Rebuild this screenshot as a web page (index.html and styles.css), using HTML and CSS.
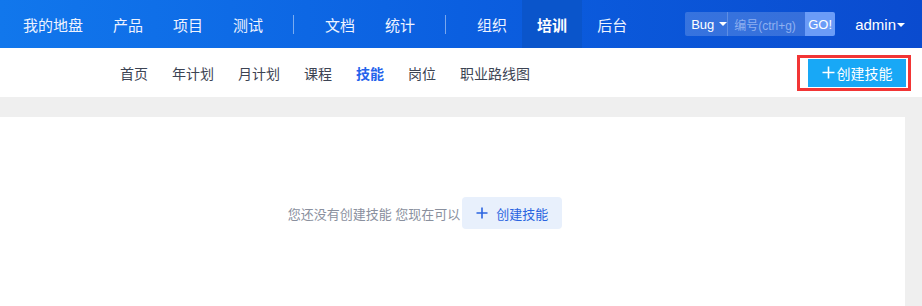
FILE: index.html
```html
<!DOCTYPE html>
<html lang="zh-CN">
<head>
    <meta charset="UTF-8">
    <meta name="viewport" content="width=device-width, initial-scale=1.0">
    <title>培训 - 技能</title>
    <link rel="stylesheet" href="styles.css">
</head>
<body>
    <header class="topbar">
        <nav class="main-nav">
            <a class="nav-item">我的地盘</a>
            <a class="nav-item">产品</a>
            <a class="nav-item">项目</a>
            <a class="nav-item">测试</a>
            <span class="nav-divider"></span>
            <a class="nav-item">文档</a>
            <a class="nav-item">统计</a>
            <span class="nav-divider"></span>
            <a class="nav-item">组织</a>
            <a class="nav-item active">培训</a>
            <a class="nav-item">后台</a>
        </nav>
        <div class="search-box">
            <span class="search-type">Bug <i class="caret"></i></span>
            <span class="search-input">编号(ctrl+g)</span>
            <span class="search-go">GO!</span>
        </div>
        <div class="user-menu">admin<i class="caret small"></i></div>
    </header>

    <div class="subbar">
        <nav class="sub-nav">
            <a class="sub-item">首页</a>
            <a class="sub-item">年计划</a>
            <a class="sub-item">月计划</a>
            <a class="sub-item">课程</a>
            <a class="sub-item active">技能</a>
            <a class="sub-item">岗位</a>
            <a class="sub-item">职业路线图</a>
        </nav>
        <div class="highlight-box">
            <button class="btn-primary">
                <svg width="13" height="13" viewBox="0 0 13 13"><path d="M6.5 0.5v12M0.5 6.5h12" stroke="#fff" stroke-width="1.6" fill="none"/></svg>
                创建技能
            </button>
        </div>
    </div>

    <main class="page">
        <div class="panel">
            <div class="empty">
                <span class="empty-text">您还没有创建技能 您现在可以</span>
                <button class="btn-light">
                    <svg width="12" height="12" viewBox="0 0 12 12"><path d="M6 0.5v11M0.5 6h11" stroke="#2a64e0" stroke-width="1.6" fill="none"/></svg>
                    创建技能
                </button>
            </div>
        </div>
    </main>
</body>
</html>
```

FILE: styles.css
```css
body {
    margin: 0;
    font-family: 'Liberation Sans', 'Noto Sans CJK SC', sans-serif;
    background: #efefef;
    color: #3c4353;
    height: 306px;
    overflow: hidden;
}
a {
    text-decoration: none;
    color: inherit;
}
.topbar {
    height: 48px;
    display: flex;
    align-items: center;
    background: linear-gradient(90deg, #1177ec 0%, #0b5fe0 50%, #0a4bcf 100%);
    color: #fff;
    padding-left: 8px;
}
.main-nav {
    display: flex;
    align-items: center;
    height: 100%;
}
.nav-item {
    font-size: 15px;
    padding: 0 15px;
    height: 100%;
    display: flex;
    align-items: center;
    color: #eef3ff;
}
.nav-item.active {
    background: #0a55cb;
    font-weight: bold;
    color: #fff;
}
.nav-divider {
    width: 1px;
    height: 19px;
    background: rgba(255, 255, 255, 0.45);
    margin: 0 16px 0 15px;
}
.search-box {
    margin-left: auto;
    display: flex;
    height: 24px;
    font-size: 13px;
    border-radius: 2px;
    overflow: hidden;
}
.search-type {
    display: flex;
    align-items: center;
    padding: 0 6px 0 6px;
    background: rgba(255, 255, 255, 0.18);
    border-right: 1px solid rgba(255, 255, 255, 0.2);
    width: 30px;
}
.search-input {
    display: flex;
    align-items: center;
    width: 71px;
    padding-left: 6px;
    font-size: 12px;
    background: rgba(255, 255, 255, 0.18);
    color: #8fb0f0;
}
.search-go {
    display: flex;
    align-items: center;
    justify-content: center;
    width: 30px;
    background: #6b9cf7;
    color: #fff;
}
.caret {
    display: inline-block;
    width: 0;
    height: 0;
    border-left: 4px solid transparent;
    border-right: 4px solid transparent;
    border-top: 4px solid #fff;
    margin-left: 5px;
}
.caret.small {
    margin-left: 1px;
    vertical-align: 3px;
}
.user-menu {
    font-size: 15px;
    margin: 0 17px 0 20px;
    color: #fff;
}
.subbar {
    height: 49px;
    background: #fff;
    display: flex;
    align-items: center;
}
.sub-nav {
    display: flex;
    margin-left: 108px;
}
.sub-item {
    font-size: 14px;
    padding: 0 12px;
    color: #3c4353;
}
.sub-item.active {
    color: #2463ec;
    font-weight: bold;
}
.highlight-box {
    margin-left: auto;
    margin-right: 11px;
    border: 3px solid #f23535;
    padding: 1px 2px 0 8px;
    height: 29px;
}
.btn-primary {
    border: none;
    background: #18a8f6;
    color: #fff;
    font-family: inherit;
    font-size: 14px;
    height: 28px;
    width: 98px;
    padding: 0;
    cursor: pointer;
    display: flex;
    align-items: center;
    justify-content: center;
    gap: 2px;
}
.page {
    padding: 20px 17px 0 0;
}
.panel {
    background: #fff;
    height: 200px;
}
.empty {
    display: flex;
    align-items: center;
    justify-content: center;
    padding: 80px 55px 0 0;
}
.empty-text {
    font-size: 13px;
    color: #8a909e;
    margin-right: 2px;
}
.btn-light {
    border: none;
    background: #e8f0fc;
    color: #2a64e0;
    font-family: inherit;
    font-size: 13px;
    height: 32px;
    width: 100px;
    border-radius: 4px;
    display: flex;
    align-items: center;
    justify-content: center;
    gap: 8px;
    cursor: pointer;
}
```
